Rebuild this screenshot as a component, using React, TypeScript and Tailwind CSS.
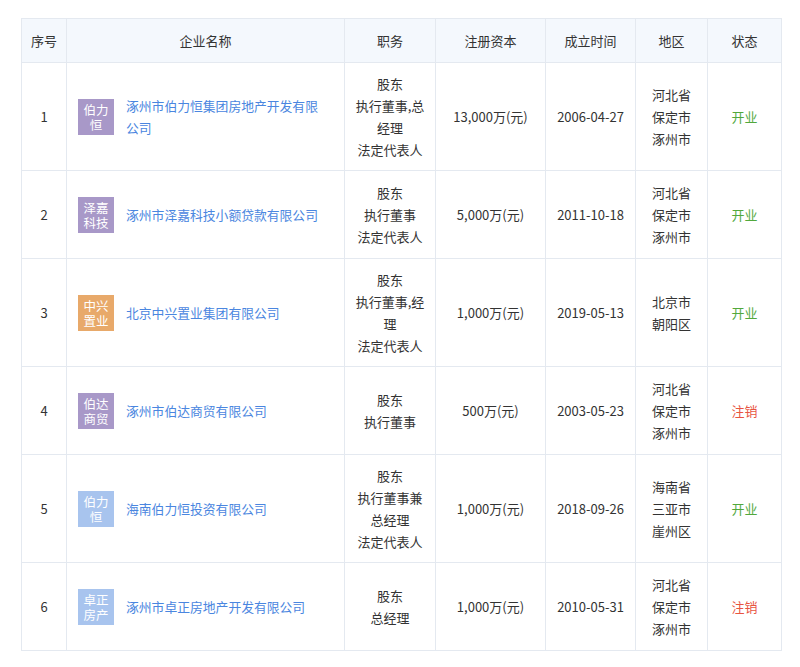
const rows = [
  { n: 1, logo: ["伯力", "恒"], c: "bg-[#a898c8]", name: "涿州市伯力恒集团房地产开发有限公司", job: ["股东", "执行董事,总", "经理", "法定代表人"], cap: "13,000万(元)", date: "2006-04-27", area: ["河北省", "保定市", "涿州市"], st: "开业", h: "h-[108px]" },
  { n: 2, logo: ["泽嘉", "科技"], c: "bg-[#a898c8]", name: "涿州市泽嘉科技小额贷款有限公司", job: ["股东", "执行董事", "法定代表人"], cap: "5,000万(元)", date: "2011-10-18", area: ["河北省", "保定市", "涿州市"], st: "开业", h: "h-[88px]" },
  { n: 3, logo: ["中兴", "置业"], c: "bg-[#e8a96a]", name: "北京中兴置业集团有限公司", job: ["股东", "执行董事,经", "理", "法定代表人"], cap: "1,000万(元)", date: "2019-05-13", area: ["北京市", "朝阳区"], st: "开业", h: "h-[108px]" },
  { n: 4, logo: ["伯达", "商贸"], c: "bg-[#a898c8]", name: "涿州市伯达商贸有限公司", job: ["股东", "执行董事"], cap: "500万(元)", date: "2003-05-23", area: ["河北省", "保定市", "涿州市"], st: "注销", h: "h-[88px]" },
  { n: 5, logo: ["伯力", "恒"], c: "bg-[#a8c4ee]", name: "海南伯力恒投资有限公司", job: ["股东", "执行董事兼", "总经理", "法定代表人"], cap: "1,000万(元)", date: "2018-09-26", area: ["海南省", "三亚市", "崖州区"], st: "开业", h: "h-[108px]" },
  { n: 6, logo: ["卓正", "房产"], c: "bg-[#a8c4ee]", name: "涿州市卓正房地产开发有限公司", job: ["股东", "总经理"], cap: "1,000万(元)", date: "2010-05-31", area: ["河北省", "保定市", "涿州市"], st: "注销", h: "h-[88px]" },
];
const cols = "grid grid-cols-[45px_278px_91px_110px_90px_72px_74px]";
const cell = "flex items-center justify-center border-r border-[#e4e9f0] text-center";
export default function App() {
  return (
    <div className="w-[800px] h-[667px] bg-white pt-[18px] pl-[21px] text-[13px] text-[#333]" style={{ fontFamily: '"Noto Sans CJK SC", "Noto Sans", sans-serif' }}>
      <div className="w-[761px] border-l border-t border-[#e4e9f0]">
        <div className={`${cols} h-[44px] bg-[#f4f8fd] border-b border-[#e4e9f0]`}>
          {["序号", "企业名称", "职务", "注册资本", "成立时间", "地区", "状态"].map((t) => (
            <div key={t} className={cell}>{t}</div>
          ))}
        </div>
        {rows.map((r) => (
          <div key={r.n} className={`${cols} ${r.h} border-b border-[#e4e9f0] leading-[22px]`}>
            <div className={cell}>{r.n}</div>
            <div className="flex items-center border-r border-[#e4e9f0] pl-[11px] pr-5">
              <div className={`${r.c} w-[36px] h-[36px] shrink-0 flex flex-col items-center justify-center text-white text-[12.5px] leading-[15px]`}>
                <span>{r.logo[0]}</span><span>{r.logo[1]}</span>
              </div>
              <div className="ml-[12px] text-[#4a86e0] text-left text-[12.8px]">{r.name}</div>
            </div>
            <div className={`${cell} flex-col`}>{r.job.map((j, i) => <span key={i}>{j}</span>)}</div>
            <div className={cell}>{r.cap}</div>
            <div className={cell}>{r.date}</div>
            <div className={`${cell} flex-col`}>{r.area.map((j, i) => <span key={i}>{j}</span>)}</div>
            <div className={`${cell} ${r.st === "开业" ? "text-[#52a83c]" : "text-[#e8543f]"}`}>{r.st}</div>
          </div>
        ))}
      </div>
    </div>
  );
}
